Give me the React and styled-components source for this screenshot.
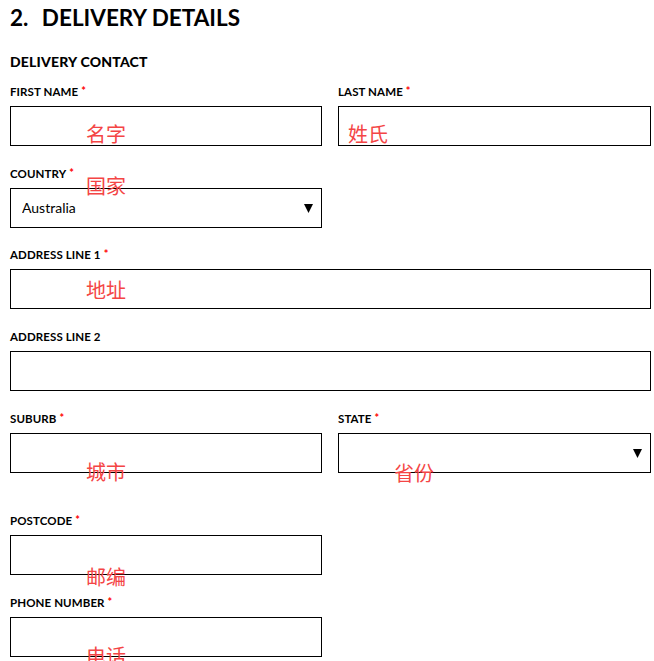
import React from "react";
import styled, { createGlobalStyle } from "styled-components";

const GlobalStyle = createGlobalStyle`
	html, body {
		margin: 0;
		padding: 0;
		background: #fff;
	}

	body {
		font-family: Lato, "Liberation Sans", sans-serif;
		color: #000;
	}
`;

const Page = styled.div`
	width: 641px;
	padding: 4px 3px 0 10px;
`;

const Title = styled.h1`
	margin: 0;
	font-size: 22.5px;
	font-weight: 700;
	line-height: 27px;
`;

const Num = styled.span`
	margin-right: 8px;
`;

const SubTitle = styled.h2`
	margin: 22px 0 15px;
	font-size: 14px;
	font-weight: 900;
	line-height: 17px;
	letter-spacing: 0.2px;
`;

const Row = styled.div`
	display: grid;
	grid-template-columns: ${(p) => (p.$half ? "312px 1fr" : "1fr")};
	column-gap: 16px;
	margin-bottom: ${(p) => (p.$loose ? "41.2px" : "20.7px")};
`;

const Field = styled.div`
	display: flex;
	flex-direction: column;
`;

const Label = styled.label`
	display: block;
	height: 13px;
	margin-bottom: 8px;
	font-size: 11.5px;
	font-weight: 700;
	line-height: 13px;
	letter-spacing: 0.1px;
	text-transform: uppercase;
	white-space: nowrap;
`;

const Req = styled.span`
	margin-left: 3px;
	color: #f00;
	font-size: 11px;
	font-weight: 700;
	line-height: 0;
	position: relative;
	top: -1px;
`;

const Control = styled.div`
	position: relative;
`;

const Input = styled.input`
	display: block;
	box-sizing: border-box;
	width: 100%;
	height: 40px;
	margin: 0;
	padding: 0 11px;
	border: 1px solid #000;
	border-radius: 0;
	background: #fff;
	font-family: Lato, "Liberation Sans", sans-serif;
	font-size: 14px;

	&:focus {
		outline: none;
	}
`;

const Select = styled.select`
	display: block;
	box-sizing: border-box;
	width: 100%;
	height: 40px;
	margin: 0;
	padding: 0 30px 0 11px;
	border: 1px solid #000;
	border-radius: 0;
	background: #fff;
	color: #000;
	font-family: Lato, "Liberation Sans", sans-serif;
	font-size: 14px;
	appearance: none;

	&:focus {
		outline: none;
	}
`;

const Arrow = styled.svg`
	position: absolute;
	top: 15px;
	right: 9px;
	pointer-events: none;
`;

/* red hand-written notes that sit over the form */
const Note = styled.span`
	position: absolute;
	left: ${(p) => p.$x}px;
	top: ${(p) => p.$y}px;
	color: #f44545;
	font-family: "Noto Sans CJK SC", sans-serif;
	font-size: 20px;
	line-height: 20px;
	white-space: nowrap;
	pointer-events: none;
`;

const Caret = () => (
	<Arrow width="9" height="10" viewBox="0 0 9 10">
		<polygon points="0,1 9,1 4.5,10" fill="#000" />
	</Arrow>
);

const TextField = ({ label, required, note }) => (
	<Field>
		<Label>
			{label}
			{required && <Req>*</Req>}
		</Label>
		<Control>
			<Input type="text" />
			{note && (
				<Note $x={note.x} $y={note.y}>
					{note.text}
				</Note>
			)}
		</Control>
	</Field>
);

const SelectField = ({ label, required, note, options }) => (
	<Field>
		<Label>
			{label}
			{required && <Req>*</Req>}
		</Label>
		<Control>
			<Select defaultValue={options[0]}>
				{options.map((o) => (
					<option key={o} value={o}>
						{o}
					</option>
				))}
			</Select>
			<Caret />
			{note && (
				<Note $x={note.x} $y={note.y}>
					{note.text}
				</Note>
			)}
		</Control>
	</Field>
);

const App = () => (
	<Page>
		<GlobalStyle />
		<Title>
			<Num>2.</Num> DELIVERY DETAILS
		</Title>
		<SubTitle>DELIVERY CONTACT</SubTitle>

		<Row $half>
			<TextField label="First name" required note={{ text: "名字", x: 76, y: 18 }} />
			<TextField label="Last name" required note={{ text: "姓氏", x: 10, y: 18 }} />
		</Row>

		<Row $half>
			<SelectField
				label="Country"
				required
				options={["Australia", "New Zealand"]}
				note={{ text: "国家", x: 76, y: -12 }}
			/>
		</Row>

		<Row>
			<TextField label="Address line 1" required note={{ text: "地址", x: 76, y: 11 }} />
		</Row>

		<Row>
			<TextField label="Address line 2" />
		</Row>

		<Row $half $loose>
			<TextField label="Suburb" required note={{ text: "城市", x: 76, y: 29 }} />
			<SelectField
				label="State"
				required
				options={[""]}
				note={{ text: "省份", x: 56, y: 30 }}
			/>
		</Row>

		<Row $half>
			<TextField label="Postcode" required note={{ text: "邮编", x: 76, y: 32 }} />
		</Row>

		<Row $half>
			<TextField label="Phone number" required note={{ text: "电话", x: 76, y: 29 }} />
		</Row>
	</Page>
);

export default App;
